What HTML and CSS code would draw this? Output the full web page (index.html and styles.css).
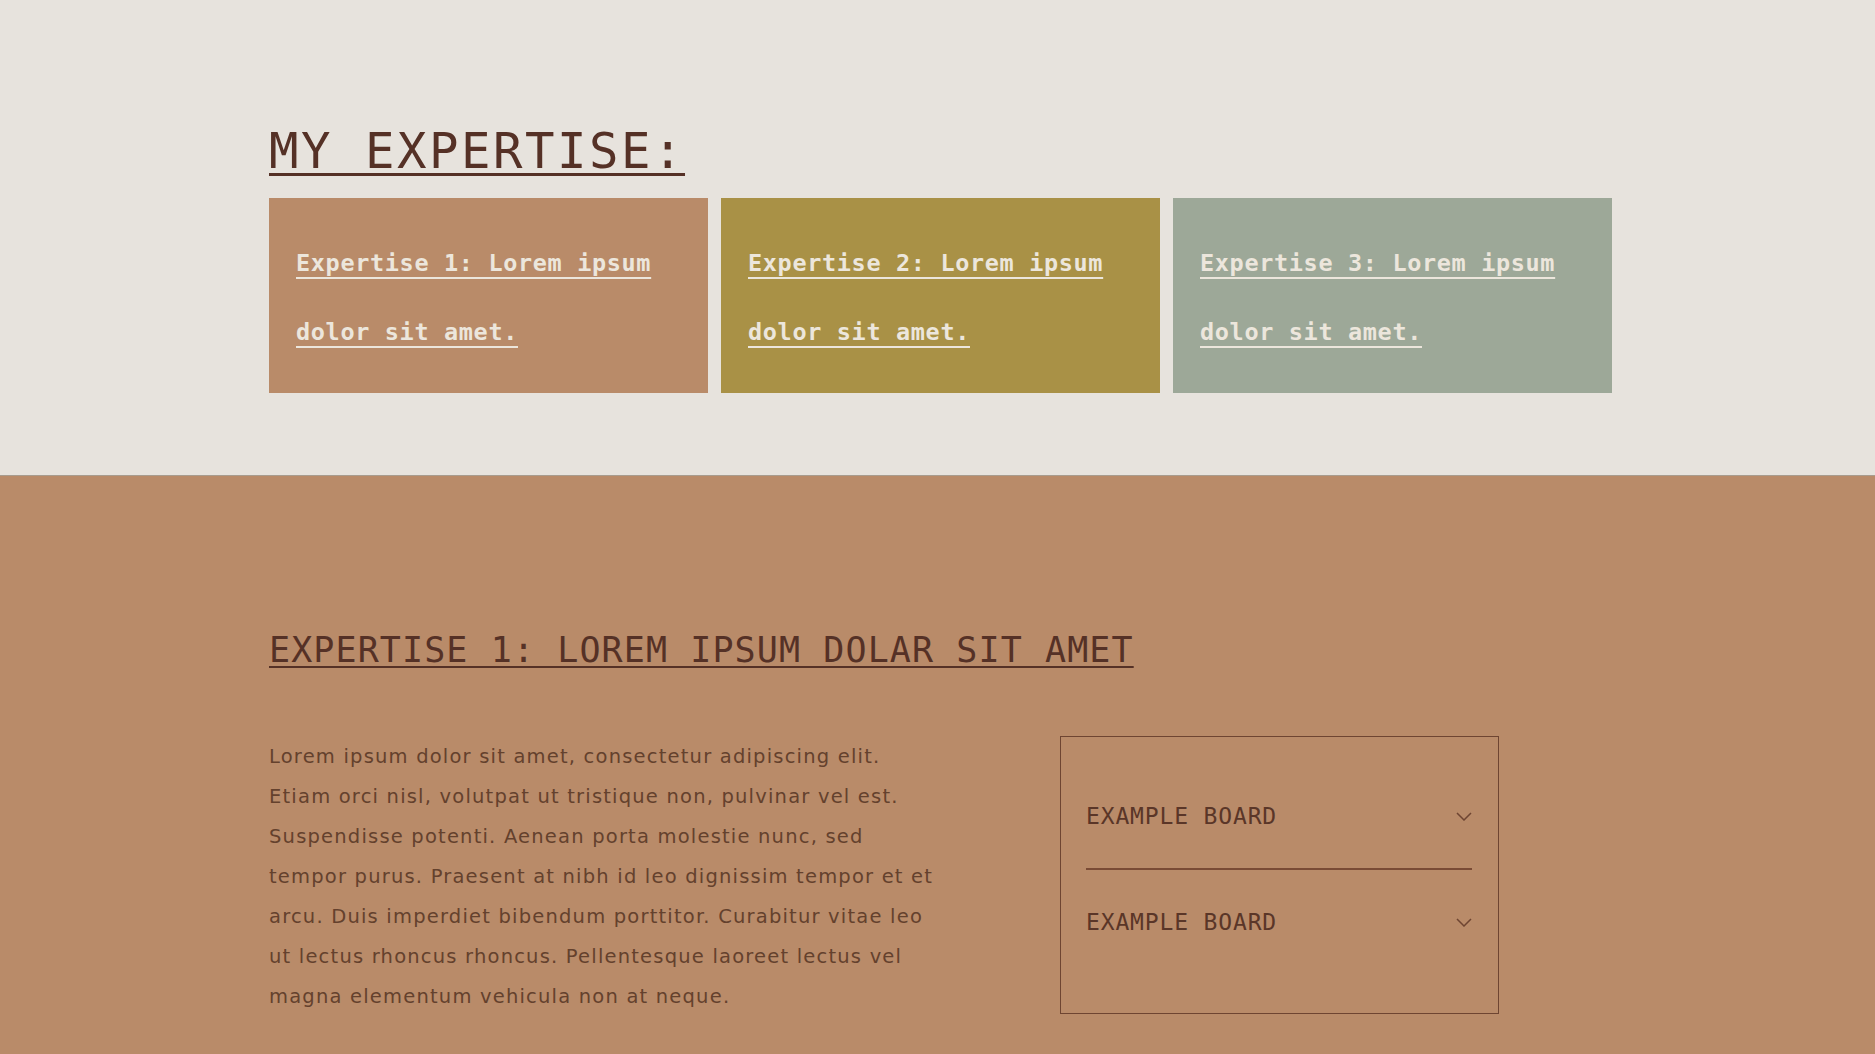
FILE: index.html
```html
<!DOCTYPE html>
<html lang="en">
<head>
  <meta charset="UTF-8" />
  <meta name="viewport" content="width=device-width, initial-scale=1.0"/>
  <title>My Expertise</title>
  <link rel="stylesheet" href="styles.css">
</head>
<body>

  <section class="expertise">
    <h1 class="section-title">MY EXPERTISE:</h1>
    <div class="cards">
      <a class="card card-clay" href="#exp1">Expertise 1: Lorem ipsum dolor sit amet.</a>
      <a class="card card-olive" href="#exp2">Expertise 2: Lorem ipsum dolor sit amet.</a>
      <a class="card card-sage" href="#exp3">Expertise 3: Lorem ipsum dolor sit amet.</a>
    </div>
  </section>

  <section class="detail" id="exp1">
    <h2 class="detail-title">EXPERTISE 1: LOREM IPSUM DOLAR SIT AMET</h2>
    <div class="detail-body">
      <p class="detail-text">Lorem ipsum dolor sit amet, consectetur adipiscing elit. Etiam orci nisl, volutpat ut tristique non, pulvinar vel est. Suspendisse potenti. Aenean porta molestie nunc, sed tempor purus. Praesent at nibh id leo dignissim tempor et et arcu. Duis imperdiet bibendum porttitor. Curabitur vitae leo ut lectus rhoncus rhoncus. Pellentesque laoreet lectus vel magna elementum vehicula non at neque.</p>

      <div class="boards">
        <div class="board">
          <span>EXAMPLE BOARD</span>
          <svg class="chevron" width="16" height="9" viewBox="0 0 16 9"><polyline points="1,1 8,8 15,1" /></svg>
        </div>
        <div class="board">
          <span>EXAMPLE BOARD</span>
          <svg class="chevron" width="16" height="9" viewBox="0 0 16 9"><polyline points="1,1 8,8 15,1" /></svg>
        </div>
      </div>
    </div>
  </section>

</body>
</html>
```

FILE: styles.css
```css
body {
  margin: 0;
  font-family: "DejaVu Sans", Arial, sans-serif;
  color: #533024;
}
.expertise {
  background: #e7e3dd;
  padding: 121px 263px 82px 269px;
}
.section-title {
  margin: 0 0 15px;
  font-family: "DejaVu Sans Mono", monospace;
  font-weight: normal;
  font-size: 49px;
  letter-spacing: 2.5px;
  line-height: 62px;
  color: #553126;
  text-decoration: underline;
  text-decoration-thickness: 3px;
  text-underline-offset: 5px;
}
.cards {
  display: grid;
  grid-template-columns: repeat(3, 439px);
  gap: 13px;
}
.card {
  display: block;
  height: 138px;
  padding: 31px 40px 26px 27px;
  font-family: "DejaVu Sans Mono", monospace;
  font-weight: bold;
  font-size: 23.5px;
  letter-spacing: 0.65px;
  line-height: 69px;
  color: #ece6dc;
  text-decoration: underline;
  text-decoration-thickness: 2px;
  text-underline-offset: 6px;
}
.card-clay {
  background: #b98b69;
}
.card-olive {
  background: #a99146;
}
.card-sage {
  background: #9da898;
}
.detail {
  background: #b98b69;
  border-top: 1px solid #a89c8e;
  padding: 152px 263px 80px 269px;
}
.detail-title {
  margin: 0 0 64px;
  font-family: "DejaVu Sans Mono", monospace;
  font-weight: normal;
  font-size: 35px;
  letter-spacing: 1.1px;
  line-height: 44px;
  color: #553126;
  text-decoration: underline;
  text-decoration-thickness: 2px;
  text-underline-offset: 4px;
}
.detail-body {
  display: grid;
  grid-template-columns: 672px 439px;
  column-gap: 119px;
  align-items: start;
}
.detail-text {
  margin: 1px 0 0;
  font-size: 19.5px;
  letter-spacing: 1.2px;
  line-height: 40px;
  color: #64412d;
}
.boards {
  border: 1.5px solid #6e4532;
  padding: 27px 26px 39px 25px;
}
.board {
  display: flex;
  justify-content: space-between;
  align-items: center;
  padding: 37px 0;
  font-family: "DejaVu Sans Mono", monospace;
  font-size: 23px;
  letter-spacing: 0.85px;
  line-height: 30px;
  color: #5a3628;
}
.board + .board {
  border-top: 2px solid #7a4b35;
}
.chevron polyline {
  fill: none;
  stroke: #6e4532;
  stroke-width: 1.5;
}
```
